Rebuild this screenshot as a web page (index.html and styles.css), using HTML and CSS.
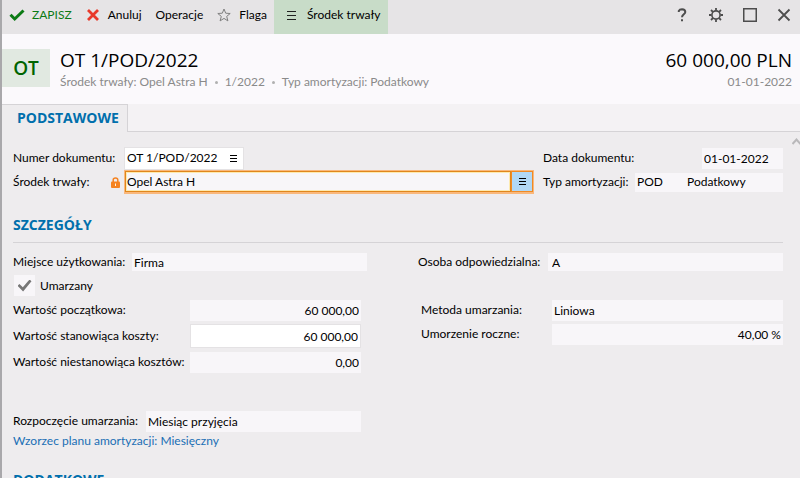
FILE: index.html
```html
<!DOCTYPE html>
<html lang="pl">
<head>
    <meta charset="UTF-8">
    <meta name="viewport" content="width=device-width, initial-scale=1.0">
    <title>OT 1/POD/2022</title>
    <link rel="stylesheet" href="styles.css">
</head>
<body>

<div class="window">
    <!-- Toolbar -->
    <header class="toolbar">
        <button class="tool save" type="button">
            <svg width="16" height="16" viewBox="0 0 16 16"><path d="M1.5 7.8 5.7 12 14.5 3.5" fill="none" stroke="#0b7a14" stroke-width="3"/></svg>
            ZAPISZ
        </button>
        <button class="tool cancel" type="button">
            <svg width="14" height="14" viewBox="0 0 14 14"><path d="M2 2 12 12M12 2 2 12" fill="none" stroke="#e8392b" stroke-width="2.8"/></svg>
            Anuluj
        </button>
        <button class="tool" type="button">Operacje</button>
        <button class="tool flag" type="button">
            <svg width="14" height="14" viewBox="0 0 14 14"><path d="M7 1 8.7 5.2 13.2 5.5 9.7 8.4 10.9 12.9 7 10.4 3.1 12.9 4.3 8.4.8 5.5 5.3 5.2Z" fill="none" stroke="#808080"/></svg>
            Flaga
        </button>
        <button class="tool asset" type="button">
            <svg width="9" height="9" viewBox="0 0 9 9"><path d="M0 .5H9M0 4.5H9M0 8.5H9" stroke="#222"/></svg>
            Środek trwały
        </button>
        <div class="window-buttons">
            <button type="button" aria-label="Pomoc"><svg width="14" height="14" viewBox="0 0 14 14"><path d="M3.8 4V2.9Q4.6 1.2 7 1.2 10.3 1.3 10.3 4C10.3 6.3 7 6.4 7 9.3M7 11.3V13.3" fill="none" stroke="#4d4d4d" stroke-width="2"/></svg></button>
            <button type="button" aria-label="Ustawienia"><svg width="14" height="14" viewBox="0 0 14 14"><circle cx="7" cy="7" r="4.1" fill="none" stroke="#4d4d4d" stroke-width="1.6"/><path d="M7 0V2.5M7 11.5V14M0 7H2.5M11.5 7H14M2 2 3.9 3.9M10.1 10.1 12 12M12 2 10.1 3.9M3.9 10.1 2 12" stroke="#4d4d4d" stroke-width="1.8"/></svg></button>
            <button type="button" aria-label="Maksymalizuj"><svg width="14" height="14" viewBox="0 0 14 14"><rect x=".75" y=".75" width="12.5" height="12.5" fill="none" stroke="#4d4d4d" stroke-width="1.5"/></svg></button>
            <button type="button" aria-label="Zamknij"><svg width="14" height="14" viewBox="0 0 14 14"><path d="M1.5 1.5 12.5 12.5M12.5 1.5 1.5 12.5" stroke="#4d4d4d" stroke-width="1.8"/></svg></button>
        </div>
    </header>

    <!-- Document summary -->
    <section class="summary">
        <div class="badge">OT</div>
        <div class="summary-main">
            <h1 class="title">OT 1/POD/2022</h1>
            <p class="subtitle"><span>Środek trwały: Opel Astra H</span><span class="dot"></span><span>1/2022</span><span class="dot"></span><span>Typ amortyzacji: Podatkowy</span></p>
        </div>
        <div class="summary-side">
            <p class="title">60 000,00 PLN</p>
            <p class="subtitle">01-01-2022</p>
        </div>
    </section>

    <nav class="tabs">
        <a class="tab" href="#podstawowe">PODSTAWOWE</a>
    </nav>

    <main class="content" id="podstawowe">
        <svg class="scroll-up" width="9" height="7" viewBox="0 0 9 7"><path d="M.5 6 4.5 1.5 8.5 6" fill="none" stroke="#b9b8ba" stroke-width="2"/></svg>

        <div class="general">
            <div class="rows">
                <div class="row">
                    <label class="label-doc" for="numer">Numer dokumentu:</label>
                    <div class="picker">
                        <input id="numer" type="text" value="OT 1/POD/2022">
                        <button class="picker-button" type="button" aria-label="Numeracja"><svg width="7" height="9" viewBox="0 0 7 9"><path d="M0 1.5H7M0 4.5H7M0 7.5H7" stroke="#000"/></svg></button>
                    </div>
                </div>
                <div class="row">
                    <label class="label-doc locked" for="srodek">Środek trwały:
                        <svg width="9" height="11" viewBox="0 0 9 11"><path d="M2.2 5V3Q2.2 1 4.5 1T6.8 3V5" fill="none" stroke="#f58220" stroke-width="1.5"/><rect y="4.5" width="9" height="6.5" rx="1" fill="#f58220"/><path d="M4.5 6.5V9" stroke="#fff3e0"/></svg>
                    </label>
                    <div class="picker focused">
                        <input id="srodek" type="text" value="Opel Astra H">
                        <button class="picker-button" type="button" aria-label="Wybierz środek trwały"><svg width="7" height="9" viewBox="0 0 7 9"><path d="M0 1.5H7M0 4.5H7M0 7.5H7" stroke="#000"/></svg></button>
                    </div>
                </div>
            </div>
            <div class="rows">
                <div class="row">
                    <label class="label-date" for="data">Data dokumentu:</label>
                    <input class="field" id="data" type="text" value="01-01-2022" readonly>
                </div>
                <div class="row">
                    <label class="label-type" for="typ">Typ amortyzacji:</label>
                    <div class="pair">
                        <input class="code" id="typ" type="text" value="POD" readonly>
                        <input class="name" type="text" value="Podatkowy" aria-label="Nazwa typu amortyzacji" readonly>
                    </div>
                </div>
            </div>
        </div>

        <h2 class="section-title">SZCZEGÓŁY</h2>

        <div class="details">
            <div class="row place">
                <label class="label-place" for="miejsce">Miejsce użytkowania:</label>
                <input class="field" id="miejsce" type="text" value="Firma" readonly>
            </div>
            <div class="row place">
                <label class="label-person" for="osoba">Osoba odpowiedzialna:</label>
                <input class="field person" id="osoba" type="text" value="A" readonly>
            </div>
        </div>

        <div class="check">
            <input class="checkbox" id="umarzany" type="checkbox" checked>
            <label for="umarzany">Umarzany</label>
        </div>

        <div class="details">
            <div class="rows amounts">
                <div class="row">
                    <label class="label-amount" for="poczatkowa">Wartość początkowa:</label>
                    <input class="field number" id="poczatkowa" type="text" value="60 000,00" readonly>
                </div>
                <div class="row">
                    <label class="label-amount" for="koszty">Wartość stanowiąca koszty:</label>
                    <input class="field number editable" id="koszty" type="text" value="60 000,00">
                </div>
                <div class="row">
                    <label class="label-amount" for="niekoszty">Wartość niestanowiąca kosztów:</label>
                    <input class="field number" id="niekoszty" type="text" value="0,00" readonly>
                </div>
            </div>
            <div class="rows method">
                <div class="row">
                    <label class="label-method" for="metoda">Metoda umarzania:</label>
                    <input class="field" id="metoda" type="text" value="Liniowa" readonly>
                </div>
                <div class="row">
                    <label class="label-method" for="roczne">Umorzenie roczne:</label>
                    <input class="field number" id="roczne" type="text" value="40,00 %" readonly>
                </div>
            </div>
        </div>

        <div class="details start">
            <div class="row amounts">
                <label class="label-start" for="rozpoczecie">Rozpoczęcie umarzania:</label>
                <input class="field" id="rozpoczecie" type="text" value="Miesiąc przyjęcia" readonly>
            </div>
        </div>
        <a class="plan" href="#plan">Wzorzec planu amortyzacji: Miesięczny</a>

        <h2 class="section-title">DODATKOWE</h2>
    </main>
</div>

</body>
</html>
```
FILE: styles.css
```css
* {
    box-sizing: border-box;
}

body {
    margin: 0;
    font-family: Lato, "Open Sans", sans-serif;
    font-size: 12px;
    line-height: 16px;
    color: #000;
    background-color: #eeecee;
}

button, input {
    font: inherit;
    color: inherit;
    border: none;
    margin: 0;
    padding: 0;
}

button {
    background: none;
    cursor: pointer;
}

h1, h2, p {
    margin: 0;
}

svg {
    flex: none;
    display: block;
}

.window {
    display: flex;
    flex-direction: column;
    height: 100vh;
    overflow: hidden;
    border-left: 2px solid #a9a8ab;
}

/* Toolbar */
.toolbar {
    display: flex;
    flex: none;
    height: 34px;
    background-color: #e6e4e6;
}

.tool {
    display: flex;
    align-items: center;
    padding: 0 7px 4px;
    white-space: nowrap;
}

.save {
    gap: 7px;
    color: #0b7a14;
}

.cancel {
    gap: 8px;
}

.flag {
    gap: 8px;
}

.asset {
    gap: 11px;
    padding: 0 8px 4px 13px;
    background-color: #c8dcc8;
}

.window-buttons {
    display: flex;
    align-items: center;
    gap: 20px;
    margin-left: auto;
    padding: 0 9px 4px 0;
}

/* Summary */
.summary {
    display: flex;
    flex: none;
    align-items: center;
    height: 70px;
    padding: 0 8px 2px 0;
    background-color: #fbf9fc;
}

.badge {
    width: 48px;
    line-height: 38px;
    font-family: "Open Sans", sans-serif;
    font-size: 19px;
    font-weight: 600;
    text-align: center;
    color: #006400;
    background-color: #e1e9e1;
}

.summary-main {
    flex: 1;
    padding-left: 10px;
}

.summary-side {
    text-align: right;
}

.title {
    font-family: "Open Sans", sans-serif;
    font-size: 19px;
    font-weight: 400;
    line-height: 28px;
}

.subtitle {
    display: flex;
    align-items: center;
    gap: 7px;
    color: #8a8a8a;
}

.summary-side .subtitle {
    justify-content: flex-end;
}

.dot {
    width: 3px;
    height: 3px;
    border-radius: 50%;
    background-color: #b0b0b0;
}

/* Tabs */
.tabs {
    display: flex;
    flex: none;
    height: 28px;
    background-color: #f4f2f4;
    border-bottom: 1px solid #d5d3d6;
}

.tab {
    height: 28px;
    padding: 0 8px 0 15px;
    line-height: 26px;
    font-family: "Open Sans", sans-serif;
    font-size: 14px;
    font-weight: 700;
    color: #006fac;
    text-decoration: none;
    background-color: #eeecee;
    border-top: 1px solid #d5d3d6;
    border-right: 1px solid #d5d3d6;
}

/* Form */
.content {
    position: relative;
    flex: 1;
    padding: 14px 17px 0 11px;
    overflow: hidden;
}

.scroll-up {
    position: absolute;
    top: 6px;
    right: -1px;
}

.general {
    display: grid;
    grid-template-columns: 1fr 240px;
    gap: 9px;
    padding-bottom: 2px;
}

.general .rows {
    gap: 0;
}

.details {
    display: grid;
    grid-template-columns: 1fr 365px;
    gap: 51px;
}

.rows {
    display: flex;
    flex-direction: column;
    gap: 2px;
    min-width: 0;
}

.row {
    display: flex;
    align-items: center;
    height: 24px;
}

label {
    flex: none;
    white-space: nowrap;
}

.label-doc {
    width: 111px;
}

.label-date {
    width: 159px;
}

.label-type {
    width: 92px;
}

.locked {
    display: flex;
    align-items: center;
    justify-content: space-between;
    padding-right: 4px;
}

.field {
    flex: 1;
    min-width: 0;
    height: 21px;
    padding: 0 2px;
    background-color: #f8f6f9;
}

.picker {
    display: flex;
    width: 120px;
    height: 23px;
    background-color: #fff;
    border: 1px solid #e4e2e4;
}

.picker input {
    flex: 1;
    min-width: 0;
    padding: 0 2px;
    background: none;
    outline: none;
}

.picker-button {
    display: flex;
    align-items: center;
    justify-content: center;
    width: 20px;
}

.focused {
    flex: 1;
    height: 24px;
    background-color: #f8f6f9;
    border: 1px solid #f9b87c;
    border-bottom-width: 2px;
}

.focused input {
    padding: 0 1px;
    border: 1px solid #e0861c;
    box-shadow: inset 0 0 0 1px #fdeab0;
}

.focused .picker-button {
    width: 22px;
    background-color: #b1d8f5;
    border: 1px solid #f08a24;
}

.pair {
    display: flex;
    flex: 1;
    min-width: 0;
    height: 19px;
    background-color: #f8f6f9;
}

.pair input {
    min-width: 0;
    padding: 0 2px;
    background: none;
}

.code {
    width: 50px;
}

.name {
    flex: 1;
}

.section-title {
    margin: 19px 0 9px;
    padding-bottom: 7px;
    font-family: "Open Sans", sans-serif;
    font-size: 14px;
    line-height: 20px;
    font-weight: 700;
    color: #006fac;
    border-bottom: 1px solid #d5d3d6;
}

.place {
    height: 20px;
}

.place .field {
    height: 18px;
}

.label-place {
    width: 119px;
}

.label-person {
    width: 130px;
}

.person {
    padding-left: 4px;
}

.check {
    display: flex;
    align-items: center;
    gap: 5px;
    margin: 3px 0 2px 1px;
}

.checkbox {
    appearance: none;
    display: grid;
    place-items: center;
    width: 21px;
    height: 21px;
    background-color: #f8f6f9;
}

.checkbox:checked::before {
    content: "";
    width: 14px;
    height: 12px;
    background-color: #777;
    clip-path: polygon(0 52%, 14% 38%, 38% 64%, 86% 0, 100% 14%, 40% 100%);
}

.amounts {
    padding-right: 6px;
}

.label-amount {
    width: 177px;
}

.number {
    text-align: right;
}

.editable {
    height: 24px;
    background-color: #fff;
    border: 1px solid #e4e2e4;
}

.method {
    gap: 0;
    padding-left: 3px;
}

.label-method {
    width: 131px;
}

.label-start {
    width: 133px;
}

.start {
    margin-top: 35px;
}

.plan {
    display: block;
    padding-bottom: 2px;
    color: #1a6fb5;
    text-decoration: none;
}
```
